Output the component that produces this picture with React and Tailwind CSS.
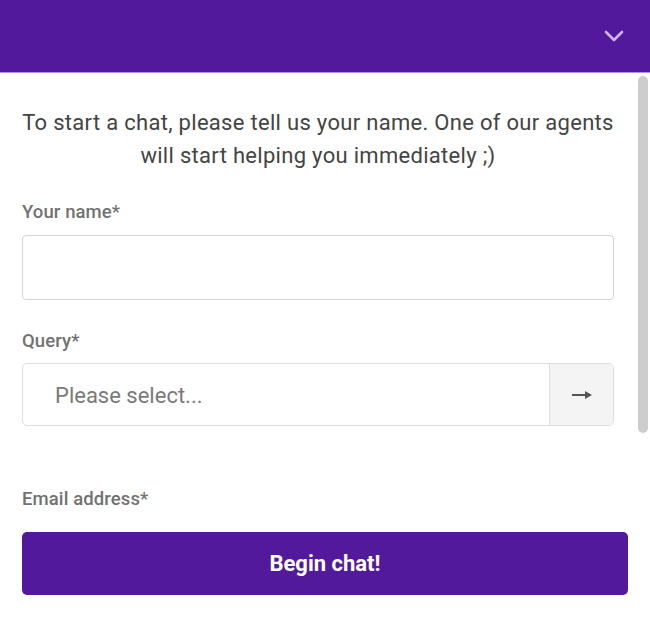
export default function App() {
  return (
    <div className="w-[650px] h-[619px] bg-white flex flex-col overflow-hidden" style={{ fontFamily: "Roboto, 'Liberation Sans', sans-serif" }}>
      <div className="h-[73px] shrink-0 bg-[#52199c] border-b border-[#b48ee6] flex items-center justify-end pr-[26px]">
        <svg width="20" height="12" viewBox="0 0 20 12" fill="none">
          <path d="M2 2 L10 10 L18 2" stroke="#d2b4f3" strokeWidth="2.6" strokeLinecap="round" strokeLinejoin="round" />
        </svg>
      </div>
      <div className="h-[443px] shrink-0 flex">
        <div className="flex-1 px-[22px] pt-[33px] overflow-hidden">
          <p className="text-center text-[22px] leading-[33px] tracking-[0.3px] text-[#444]">
            To start a chat, please tell us your name. One of our agents will start helping you immediately ;)
          </p>
          <label className="block mt-[28px] text-[18.5px] leading-[24px] font-medium tracking-[0.1px] text-[#727272]">Your name*</label>
          <div className="mt-[11px] h-[65px] border border-[#d4d4d4] rounded-[4px]"></div>
          <label className="block mt-[29px] text-[18.5px] leading-[24px] font-medium tracking-[0.1px] text-[#727272]">Query*</label>
          <div className="mt-[10px] h-[63px] border border-[#dedede] rounded-[5px] flex overflow-hidden">
            <div className="flex-1 flex items-center pl-[32px] pt-[2px] text-[22px] text-[#7a7a7a]">Please select...</div>
            <div className="w-[64px] border-l border-[#dedede] bg-[#f4f4f4] flex items-center justify-center">
              <svg width="22" height="10" viewBox="0 0 22 10">
                <path d="M1 5 H15" stroke="#555" strokeWidth="2" />
                <path d="M14 1 L21 5 L14 9 Z" fill="#555" />
              </svg>
            </div>
          </div>
          <label className="block mt-[61px] text-[18.5px] leading-[24px] font-medium tracking-[0.1px] text-[#727272]">Email address*</label>
        </div>
        <div className="w-[14px] shrink-0 pt-[3px] pl-[2px]">
          <div className="w-[10px] h-[357px] bg-[#cdcdcd] rounded-[5px]"></div>
        </div>
      </div>
      <div className="px-[22px] pt-[16px]">
        <button className="w-full h-[63px] bg-[#52199c] rounded-[5px] text-white font-bold text-[22px]">Begin chat!</button>
      </div>
    </div>
  );
}
